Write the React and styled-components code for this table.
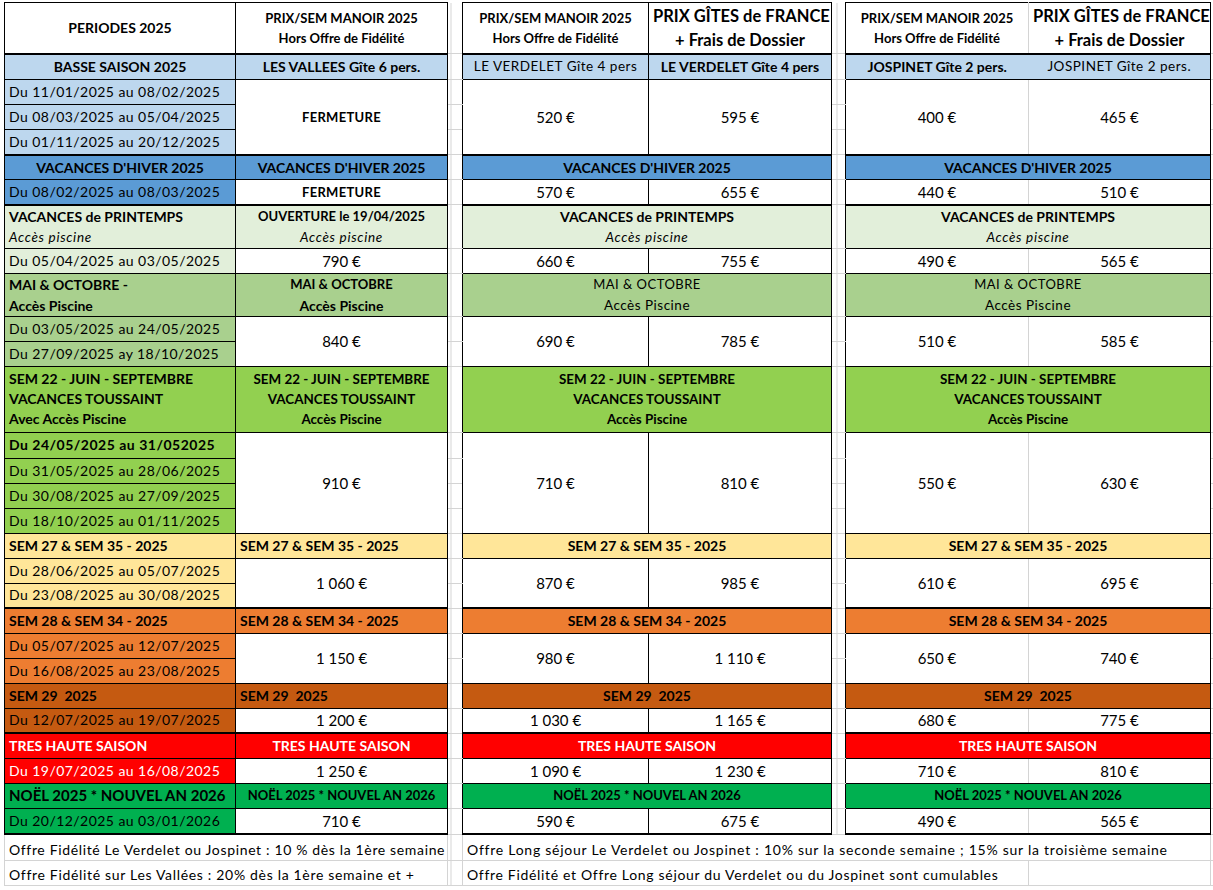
import React from 'react';
import styled, { createGlobalStyle } from 'styled-components';

const GRID = '#d4d4d4';

const GlobalStyle = createGlobalStyle`
  html, body {
    margin: 0;
    padding: 0;
    background: #fff;
  }
  body {
    font-family: Lato, "Liberation Sans", Arial, sans-serif;
    color: #000;
  }
  #root {
    width: 1213px;
    height: 890px;
    overflow: hidden;
  }
`;

const Page = styled.div`
  padding: 2px 0 0 4px;
`;

const Sheet = styled.table`
  border-collapse: collapse;
  table-layout: fixed;
  width: 1209px;
`;

const Col = styled.col`
  width: ${p => p.$w}px;
`;

const Row = styled.tr`
  height: ${p => p.$h || 25}px;
`;

const Cell = styled.td`
  padding: 0 4px;
  border: 1px solid #000;
  border-bottom-width: ${p => (p.$thick ? 2 : 1)}px;
  background: ${p => p.$bg || '#fff'};
  color: ${p => p.$fg || '#000'};
  text-align: ${p => p.$align || 'center'};
  vertical-align: middle;
  white-space: nowrap;
  overflow: hidden;
  font-size: 13px;
  line-height: 20px;
  ${p => p.$noRight && 'border-right: none;'}
  ${p => p.$grayRight && `border-right-color: ${GRID};`}
  ${p => p.$noLeft && 'border-left: none;'}
`;

const HeadCell = styled(Cell)`
  font-weight: 700;
  border-bottom-width: 2px;
  font-size: ${p => (p.$big ? '16.5px' : p.$title ? '14px' : '13px')};
  line-height: ${p => (p.$big ? '24px' : '20px')};
`;

const Label = styled(Cell)`
  font-size: ${p => p.$size || 14}px;
  line-height: ${p => (p.$tight ? '20px' : '21px')};
`;

const Line = styled.div`
  font-weight: ${p => (p.$w === 'b' ? 700 : 400)};
  font-style: ${p => (p.$w === 'i' ? 'italic' : 'normal')};
  font-size: ${p => (p.$size ? `${p.$size}px` : p.$w === 'b' ? 'inherit' : '13.5px')};
  letter-spacing: ${p => (p.$w === 'b' ? '0' : p.$w === 'i' ? '0.7px' : '0.5px')};
`;

const DateCell = styled(Cell)`
  text-align: left;
  font-size: 14px;
  letter-spacing: ${p => (p.$bold ? '0.5px' : '0.45px')};
  font-weight: ${p => (p.$bold ? 700 : 400)};
`;

const PriceCell = styled(Cell)`
  font-size: ${p => (p.$closed ? '13px' : '15px')};
  font-weight: ${p => (p.$closed ? 700 : 400)};
  letter-spacing: ${p => (p.$closed ? '0.3px' : '0')};
`;

const GapCell = styled.td`
  padding: 0;
  border: none;
  border-bottom: 1px solid ${GRID};
  background: linear-gradient(
    to right,
    transparent ${p => p.$at}px,
    ${GRID} ${p => p.$at}px,
    ${GRID} ${p => p.$at + 1}px,
    transparent ${p => p.$at + 1}px
  );
`;

const TailCell = styled.td`
  padding: 0;
  border: none;
  border-bottom: 1px solid ${GRID};
`;

const NoteCell = styled.td`
  padding: 0 4px 1px;
  border: 1px solid ${GRID};
  text-align: left;
  white-space: nowrap;
  overflow: hidden;
  font-size: 14px;
  line-height: 18px;
  letter-spacing: ${p => p.$ls || 0.6}px;
  vertical-align: bottom;
`;

const Lines = ({ lines }) =>
  lines.map(([text, w, size], i) => (
    <Line key={i} $w={w} $size={size}>
      {text}
    </Line>
  ));

const SEM22 = [
  ['SEM 22 - JUIN - SEPTEMBRE', 'b'],
  ['VACANCES TOUSSAINT', 'b'],
  ['Accès Piscine', 'b'],
];

const one = t => [[t, 'b']];

const SECTIONS = [
  {
    id: 'basse',
    bg: '#bdd7ee',
    h: 26,
    thick: true,
    a: ['center', one('BASSE SAISON 2025')],
    b: ['center', one('LES VALLEES Gîte 6 pers.')],
    split: [
      ['LE VERDELET Gîte 4 pers', 'n'],
      ['LE VERDELET Gîte 4 pers', 'b'],
      ['JOSPINET Gîte 2 pers.', 'b'],
      ['JOSPINET Gîte 2 pers.', 'n'],
    ],
    dates: [['Du 11/01/2025 au 08/02/2025'], ['Du 08/03/2025 au 05/04/2025'], ['Du 01/11/2025 au 20/12/2025']],
    prices: ['FERMETURE', '520 €', '595 €', '400 €', '465 €'],
  },
  {
    id: 'hiver',
    bg: '#5b9bd5',
    thick: true,
    a: ['center', one("VACANCES D'HIVER 2025")],
    b: ['center', one("VACANCES D'HIVER 2025")],
    group: one("VACANCES D'HIVER 2025"),
    dates: [['Du 08/02/2025 au 08/03/2025']],
    prices: ['FERMETURE', '570 €', '655 €', '440 €', '510 €'],
  },
  {
    id: 'printemps',
    bg: '#e2efda',
    h: 42,
    a: ['left', [['VACANCES de PRINTEMPS', 'b'], ['Accès piscine', 'i']]],
    b: ['center', [['OUVERTURE le 19/04/2025', 'b', 13], ['Accès piscine', 'i']]],
    group: [['VACANCES de PRINTEMPS', 'b'], ['Accès piscine', 'i']],
    dates: [['Du 05/04/2025 au 03/05/2025']],
    prices: ['790 €', '660 €', '755 €', '490 €', '565 €'],
  },
  {
    id: 'mai',
    bg: '#a9d08e',
    h: 43,
    a: ['left', [['MAI & OCTOBRE -', 'b'], ['Accès Piscine', 'b']]],
    b: ['center', [['MAI & OCTOBRE', 'b', 13], ['Accès Piscine', 'b']]],
    group: [['MAI & OCTOBRE', 'n', 13], ['Accès Piscine', 'n']],
    dates: [['Du 03/05/2025 au 24/05/2025'], ['Du 27/09/2025 ay 18/10/2025']],
    prices: ['840 €', '690 €', '785 €', '510 €', '585 €'],
  },
  {
    id: 'sem22',
    bg: '#92d050',
    h: 66,
    tight: true,
    bSize: 13.4,
    a: ['left', [SEM22[0], SEM22[1], ['Avec Accès Piscine', 'b']]],
    b: ['center', SEM22],
    group: SEM22,
    dates: [
      ['Du 24/05/2025 au 31/052025', true, 26],
      ['Du 31/05/2025 au 28/06/2025'],
      ['Du 30/08/2025 au 27/09/2025'],
      ['Du 18/10/2025 au 01/11/2025'],
    ],
    prices: ['910 €', '710 €', '810 €', '550 €', '630 €'],
  },
  {
    id: 'sem27',
    bg: '#ffe699',
    thick: true,
    a: ['left', one('SEM 27 & SEM 35 - 2025')],
    b: ['left', one('SEM 27 & SEM 35 - 2025')],
    group: one('SEM 27 & SEM 35 - 2025'),
    dates: [['Du 28/06/2025 au 05/07/2025'], ['Du 23/08/2025 au 30/08/2025']],
    prices: ['1\u00a0060 €', '870 €', '985 €', '610 €', '695 €'],
  },
  {
    id: 'sem28',
    bg: '#ed7d31',
    a: ['left', one('SEM 28 & SEM 34 - 2025')],
    b: ['left', one('SEM 28 & SEM 34 - 2025')],
    group: one('SEM 28 & SEM 34 - 2025'),
    dates: [['Du 05/07/2025 au 12/07/2025'], ['Du 16/08/2025 au 23/08/2025']],
    prices: ['1\u00a0150 €', '980 €', '1\u00a0110 €', '650 €', '740 €'],
  },
  {
    id: 'sem29',
    bg: '#c55a11',
    thick: true,
    a: ['left', one('SEM 29\u00a0 2025')],
    b: ['left', one('SEM 29\u00a0 2025')],
    group: one('SEM 29\u00a0 2025'),
    dates: [['Du 12/07/2025 au 19/07/2025']],
    prices: ['1\u00a0200 €', '1\u00a0030 €', '1\u00a0165 €', '680 €', '775 €'],
  },
  {
    id: 'tres',
    bg: '#ff0000',
    fg: '#fff',
    a: ['left', one('TRES HAUTE SAISON')],
    b: ['center', one('TRES HAUTE SAISON')],
    group: one('TRES HAUTE SAISON'),
    dates: [['Du 19/07/2025 au 16/08/2025']],
    prices: ['1\u00a0250 €', '1\u00a0090 €', '1\u00a0230 €', '710 €', '810 €'],
  },
  {
    id: 'noel',
    bg: '#00b050',
    thick: true,
    aSize: 15,
    bSize: 13,
    a: ['left', one('NOËL 2025 * NOUVEL AN 2026')],
    b: ['center', one('NOËL 2025 * NOUVEL AN 2026')],
    group: one('NOËL 2025 * NOUVEL AN 2026'),
    dates: [['Du 20/12/2025 au 03/01/2026', false, 26]],
    prices: ['710 €', '590 €', '675 €', '490 €', '565 €'],
  },
];

const Section = ({ s }) => {
  const span = s.dates.length;
  const last = s.thick;
  return (
    <>
      <Row $h={s.h}>
        <Label $bg={s.bg} $fg={s.fg} $align={s.a[0]} $size={s.aSize} $tight={s.tight}>
          <Lines lines={s.a[1]} />
        </Label>
        <Label $bg={s.bg} $fg={s.fg} $align={s.b[0]} $size={s.bSize} $tight={s.tight}>
          <Lines lines={s.b[1]} />
        </Label>
        <GapCell $at={2} />
        {s.split ? (
          <>
            <Label $bg={s.bg}><Lines lines={[s.split[0]]} /></Label>
            <Label $bg={s.bg}><Lines lines={[s.split[1]]} /></Label>
          </>
        ) : (
          <Label colSpan={2} $bg={s.bg} $fg={s.fg} $size={s.bSize} $tight={s.tight}>
            <Lines lines={s.group} />
          </Label>
        )}
        <GapCell $at={4} />
        {s.split ? (
          <>
            <Label $bg={s.bg} $noRight><Lines lines={[s.split[2]]} /></Label>
            <Label $bg={s.bg} $noLeft><Lines lines={[s.split[3]]} /></Label>
          </>
        ) : (
          <Label colSpan={2} $bg={s.bg} $fg={s.fg} $size={s.bSize} $tight={s.tight}>
            <Lines lines={s.group} />
          </Label>
        )}
        <TailCell />
      </Row>
      {s.dates.map(([text, bold, h], i) => (
        <Row key={text} $h={h}>
          <DateCell $bg={s.bg} $fg={s.fg} $bold={bold} $thick={last && i === span - 1}>
            {text}
          </DateCell>
          {i === 0 && (
            <PriceCell rowSpan={span} $closed={s.prices[0] === 'FERMETURE'} $thick={last}>
              {s.prices[0]}
            </PriceCell>
          )}
          <GapCell $at={2} />
          {i === 0 && (
            <>
              <PriceCell rowSpan={span} $thick={last}>{s.prices[1]}</PriceCell>
              <PriceCell rowSpan={span} $thick={last}>{s.prices[2]}</PriceCell>
            </>
          )}
          <GapCell $at={4} />
          {i === 0 && (
            <>
              <PriceCell rowSpan={span} $thick={last} $grayRight>{s.prices[3]}</PriceCell>
              <PriceCell rowSpan={span} $thick={last} $noLeft>{s.prices[4]}</PriceCell>
            </>
          )}
          <TailCell />
        </Row>
      ))}
    </>
  );
};

const PRIX = [
  ['PRIX/SEM MANOIR 2025', 'b'],
  ['Hors Offre de Fidélité', 'b'],
];
const GITES = [
  ['PRIX GÎTES de FRANCE', 'b'],
  ['+ Frais de Dossier', 'b'],
];

export default function App() {
  return (
    <Page>
      <GlobalStyle />
      <Sheet>
        <colgroup>
          <Col $w={231} />
          <Col $w={212} />
          <Col $w={15} />
          <Col $w={186} />
          <Col $w={183} />
          <Col $w={14} />
          <Col $w={183} />
          <Col $w={182} />
          <Col $w={3} />
        </colgroup>
        <tbody>
          <Row $h={51}>
            <HeadCell $title>PERIODES 2025</HeadCell>
            <HeadCell><Lines lines={PRIX} /></HeadCell>
            <GapCell $at={2} />
            <HeadCell><Lines lines={PRIX} /></HeadCell>
            <HeadCell $big><Lines lines={GITES} /></HeadCell>
            <GapCell $at={4} />
            <HeadCell $grayRight><Lines lines={PRIX} /></HeadCell>
            <HeadCell $big $noLeft><Lines lines={GITES} /></HeadCell>
            <TailCell />
          </Row>
          {SECTIONS.map(s => (
            <Section key={s.id} s={s} />
          ))}
          <Row $h={26}>
            <NoteCell colSpan={2} $ls={0.65}>
              Offre Fidélité Le Verdelet ou Jospinet : 10 % dès la 1ère semaine
            </NoteCell>
            <GapCell $at={2} />
            <NoteCell colSpan={5} $ls={0.75}>
              Offre Long séjour Le Verdelet ou Jospinet : 10% sur la seconde semaine ; 15% sur la troisième semaine
            </NoteCell>
            <TailCell />
          </Row>
          <Row $h={25}>
            <NoteCell colSpan={2} $ls={0.68}>
              Offre Fidélité sur Les Vallées : 20% dès la 1ère semaine et +
            </NoteCell>
            <GapCell $at={2} />
            <NoteCell colSpan={4} $ls={0.68}>
              Offre Fidélité et Offre Long séjour du Verdelet ou du Jospinet sont cumulables
            </NoteCell>
            <NoteCell />
            <TailCell />
          </Row>
        </tbody>
      </Sheet>
    </Page>
  );
}
